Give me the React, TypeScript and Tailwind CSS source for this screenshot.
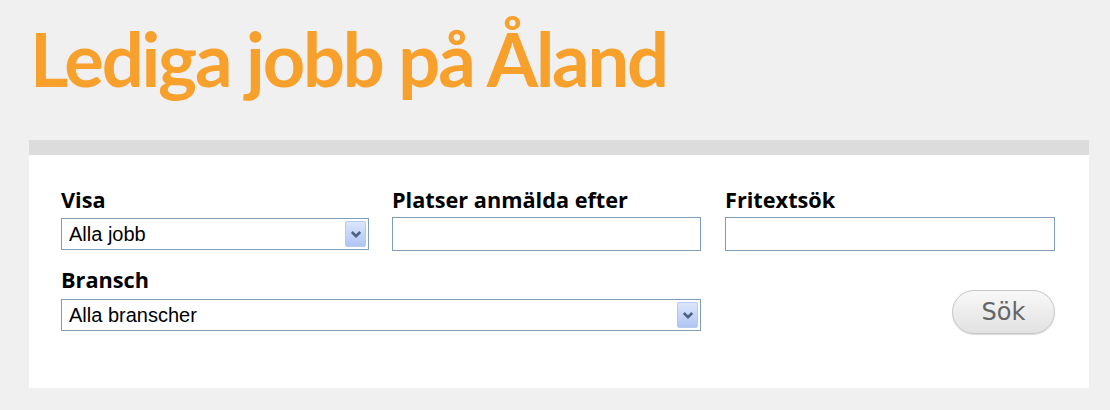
import React from "react";

function Arrow() {
  return (
    <div className="absolute right-[2px] top-[2px] bottom-[2px] w-[21px] rounded-[2px] border border-[#b8c9ee] bg-gradient-to-b from-[#dce6fb] to-[#b0c5f4] flex items-center justify-center">
      <svg width="12" height="9" viewBox="0 0 12 9">
        <path d="M1.8 2 L6 6.2 L10.2 2" fill="none" stroke="#4d6185" strokeWidth="2.6" />
      </svg>
    </div>
  );
}

function Select({ value, className }: { value: string; className: string }) {
  return (
    <div className={"relative h-[32px] border border-[#7f9db9] bg-white flex items-center pl-[7px] " + className}>
      <span className="text-[20px] text-black leading-none" style={{ fontFamily: '"Liberation Sans", Arial, sans-serif' }}>{value}</span>
      <Arrow />
    </div>
  );
}

function Input({ className }: { className: string }) {
  return <div className={"h-[34px] border border-[#7f9db9] bg-white " + className} />;
}

const labelFont = { fontFamily: '"Open Sans", "Noto Sans", sans-serif' };

export default function App() {
  return (
    <div className="w-[1110px] h-[410px] bg-[#f0f0f0] overflow-hidden">
      <h1
        className="pl-[30px] pt-[22px] h-[140px] text-[#f8a02c] text-[74px] font-bold leading-none tracking-[-2.2px]"
        style={{ fontFamily: 'Lato, "Noto Sans", sans-serif' }}
      >
        Lediga jobb på Åland
      </h1>
      <div className="ml-[29px] w-[1060px] h-[248px] bg-white border-t-[15px] border-[#dcdcdc]">
        <div className="pl-[32px] pt-[30px] grid grid-cols-[331px_333px_330px]" style={labelFont}>
          <div>
            <div className="text-[21.7px] font-bold text-black leading-[30px]">Visa</div>
            <Select value="Alla jobb" className="w-[308px] mt-[3px]" />
          </div>
          <div>
            <div className="text-[21.7px] font-bold text-black leading-[30px]">Platser anmälda efter</div>
            <Input className="w-[309px] mt-[2px]" />
          </div>
          <div>
            <div className="text-[21.7px] font-bold text-black leading-[30px]">Fritextsök</div>
            <Input className="w-[330px] mt-[2px]" />
          </div>
          <div className="col-span-2 mt-[14px]">
            <div className="text-[21.7px] font-bold text-black leading-[30px]">Bransch</div>
            <Select value="Alla branscher" className="w-[640px] mt-[4px]" />
          </div>
          <div className="mt-[39px] flex justify-end">
            <div
              className="w-[103px] h-[44px] rounded-full border border-[#c6c6c6] bg-gradient-to-b from-[#f8f8f8] to-[#e2e2e2] flex items-center justify-center text-[24px] font-normal text-[#666] shadow-[0_1px_1px_rgba(0,0,0,0.15)]"
              style={{ fontFamily: '"DejaVu Sans", Verdana, sans-serif' }}
            >
              Sök
            </div>
          </div>
        </div>
      </div>
    </div>
  );
}
